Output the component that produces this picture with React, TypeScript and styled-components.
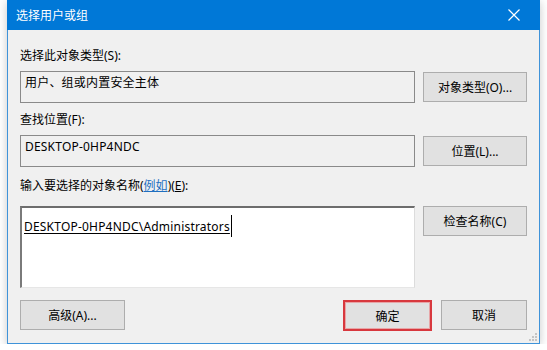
import React from 'react';
import styled, { createGlobalStyle } from 'styled-components';

const GlobalStyle = createGlobalStyle`
  * {
    box-sizing: border-box;
  }
  body {
    margin: 0;
    background: #ffffff;
    font-family: 'Noto Sans', 'Noto Sans CJK SC', sans-serif;
    font-size: 12px;
    color: #000;
  }
`;

const Window = styled.div`
  position: relative;
  margin-left: 7px;
  width: 533px;
  height: 344px;
  display: flex;
  flex-direction: column;
  border: 1px solid #3f93d9;
  border-top: none;
  background: #f0f0f0;
  box-shadow: 0 2px 9px rgba(0, 0, 0, 0.22);
`;

const TitleBar = styled.div`
  height: 30px;
  margin: 0 -1px;
  padding: 0 8px 0 9px;
  display: flex;
  align-items: center;
  justify-content: space-between;
  background: #0078d7;
  color: #ffffff;
  font-size: 12px;
`;

const CloseButton = styled.div`
  width: 30px;
  height: 30px;
  display: flex;
  align-items: center;
  justify-content: center;
  margin-right: 3px;
`;

const Body = styled.div`
  flex: 1;
  padding: 18px 12px 11px 12px;
  display: flex;
  flex-direction: column;
`;

const Label = styled.div<{ $top: number; $bottom: number }>`
  height: 16px;
  line-height: 16px;
  margin-top: ${(p) => p.$top}px;
  margin-bottom: ${(p) => p.$bottom}px;
  white-space: nowrap;
`;

const Row = styled.div`
  display: grid;
  grid-template-columns: 395px 104px;
  column-gap: 8px;
  align-items: start;
`;

const ReadOnlyBox = styled.div`
  height: 32px;
  padding: 3px 4px;
  border: 1px solid #8a8a8a;
  background: #f0f0f0;
  line-height: 16px;
  letter-spacing: 0.2px;
  white-space: nowrap;
`;

const NamesBox = styled.div`
  height: 82px;
  padding: 7px 2px;
  background: #ffffff;
  border-top: 2px solid #6d6d6d;
  border-left: 2px solid #7a7a7a;
  border-right: 1px solid #dcdcdc;
  border-bottom: 1px solid #e6e6e6;
  line-height: 16px;
  white-space: nowrap;
`;

const ResolvedName = styled.span`
  text-decoration: underline;
  text-underline-offset: 2px;
  letter-spacing: 0.2px;
`;

const Caret = styled.span`
  display: inline-block;
  width: 1px;
  height: 22px;
  margin-left: 1px;
  vertical-align: -6px;
  background: #000;
`;

const Button = styled.div<{ $width?: number; $offset?: number }>`
  width: ${(p) => (p.$width ? `${p.$width}px` : '100%')};
  height: 30px;
  margin-top: ${(p) => p.$offset ?? 0}px;
  display: flex;
  align-items: center;
  justify-content: center;
  background: #e1e1e1;
  border: 1px solid #adadad;
  white-space: nowrap;
`;

const HighlightButton = styled(Button)`
  height: 31px;
  border: 2px solid #d8383e;
  box-shadow: inset 0 0 0 1px #e7a5a7;
`;

const Link = styled.span`
  color: #1f6fc0;
  text-decoration: underline;
`;

const Mnemonic = styled.span`
  text-decoration: underline;
`;

const Footer = styled.div`
  margin-top: 12px;
  display: flex;
  justify-content: space-between;
  align-items: flex-start;
`;

const FooterGroup = styled.div`
  display: flex;
  gap: 9px;
`;

const Grip = styled.svg`
  position: absolute;
  right: 2px;
  bottom: 2px;
`;

const CloseIcon = () => (
  <svg width="12" height="12" viewBox="0 0 12 12">
    <path d="M0.5 0.5L11.5 11.5M11.5 0.5L0.5 11.5" stroke="#ffffff" strokeWidth="1.2" />
  </svg>
);

const App = () => (
  <>
    <GlobalStyle />
    <Window>
      <TitleBar>
        <span>选择用户或组</span>
        <CloseButton>
          <CloseIcon />
        </CloseButton>
      </TitleBar>
      <Body>
        <Label $top={0} $bottom={7}>选择此对象类型(S):</Label>
        <Row>
          <ReadOnlyBox>用户、组或内置安全主体</ReadOnlyBox>
          <Button $offset={1}>对象类型(O)...</Button>
        </Row>

        <Label $top={9} $bottom={7}>查找位置(F):</Label>
        <Row>
          <ReadOnlyBox>DESKTOP-0HP4NDC</ReadOnlyBox>
          <Button $offset={1}>位置(L)...</Button>
        </Row>

        <Label $top={11} $bottom={12}>
          输入要选择的对象名称(<Link>例如</Link>)(<Mnemonic>E</Mnemonic>):
        </Label>
        <Row>
          <NamesBox>
            <ResolvedName>DESKTOP-0HP4NDC\Administrators</ResolvedName>
            <Caret />
          </NamesBox>
          <Button>检查名称(C)</Button>
        </Row>

        <Footer>
          <Button $width={105}>高级(A)...</Button>
          <FooterGroup>
            <HighlightButton $width={89}>确定</HighlightButton>
            <Button $width={86}>取消</Button>
          </FooterGroup>
        </Footer>
      </Body>
      <Grip width="9" height="9" viewBox="0 0 9 9">
        <rect x="7" y="1" width="2" height="2" fill="#c4c4c4" />
        <rect x="4" y="4" width="2" height="2" fill="#c4c4c4" />
        <rect x="7" y="4" width="2" height="2" fill="#c4c4c4" />
        <rect x="1" y="7" width="2" height="2" fill="#c4c4c4" />
        <rect x="4" y="7" width="2" height="2" fill="#c4c4c4" />
        <rect x="7" y="7" width="2" height="2" fill="#c4c4c4" />
      </Grip>
    </Window>
  </>
);

export default App;
